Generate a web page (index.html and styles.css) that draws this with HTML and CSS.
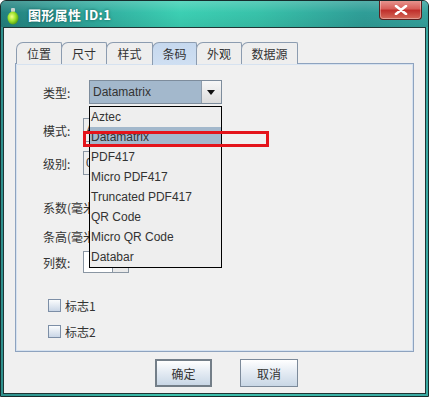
FILE: index.html
```html
<!DOCTYPE html>
<html lang="zh-CN">
<head>
    <meta charset="UTF-8">
    <title>图形属性 ID:1</title>
    <link rel="stylesheet" href="styles.css">
</head>
<body>
    <div class="window">
        <div class="titlebar">
            <svg class="app-icon" width="12" height="17" viewBox="0 0 12 17">
                <defs>
                    <radialGradient id="bulb" cx="0.4" cy="0.4" r="0.7">
                        <stop offset="0" stop-color="#f4ff8a"/>
                        <stop offset="0.5" stop-color="#9be22a"/>
                        <stop offset="1" stop-color="#3c8a10"/>
                    </radialGradient>
                </defs>
                <rect x="4" y="0" width="4" height="4" rx="1" fill="#c9d3d0"/>
                <ellipse cx="6" cy="10" rx="5.5" ry="6.5" fill="url(#bulb)"/>
            </svg>
            <span class="title">图形属性 ID:1</span>
            <div class="close-btn">
                <svg width="14" height="10" viewBox="0 0 14 10">
                    <path d="M2 1 L12 9 M12 1 L2 9" stroke="#fff" stroke-width="2.6" stroke-linecap="round"/>
                </svg>
            </div>
        </div>

        <div class="client">
            <div class="tabs">
                <div class="tab w46">位置</div>
                <div class="tab w46">尺寸</div>
                <div class="tab w47">样式</div>
                <div class="tab w45 selected">条码</div>
                <div class="tab w46">外观</div>
                <div class="tab w57">数据源</div>
            </div>

            <div class="panel">
                <div class="row r-type">
                    <span class="label">类型:</span>
                    <div class="combo">
                        <span class="combo-value">Datamatrix</span>
                        <span class="combo-arrow"></span>
                    </div>
                </div>
                <div class="row r-mode">
                    <span class="label">模式:</span>
                    <div class="field">A</div>
                </div>
                <div class="row r-level">
                    <span class="label">级别:</span>
                    <div class="field">0</div>
                </div>
                <div class="row r-factor">
                    <span class="label clip">系数(毫米):</span>
                </div>
                <div class="row r-height">
                    <span class="label clip">条高(毫米):</span>
                </div>
                <div class="row r-cols">
                    <span class="label">列数:</span>
                    <div class="spinner">
                        <div class="spin-field"></div>
                        <div class="spin-btns"></div>
                    </div>
                </div>

                <label class="check c1"><span class="box"></span>标志1</label>
                <label class="check c2"><span class="box"></span>标志2</label>

                <ul class="dropdown">
                    <li>Aztec</li>
                    <li class="active">Datamatrix</li>
                    <li>PDF417</li>
                    <li>Micro PDF417</li>
                    <li>Truncated PDF417</li>
                    <li>QR Code</li>
                    <li>Micro QR Code</li>
                    <li>Databar</li>
                </ul>
                <div class="mark"></div>
            </div>

            <div class="buttons">
                <button class="btn default">确定</button>
                <button class="btn">取消</button>
            </div>
        </div>
    </div>
</body>
</html>
```

FILE: styles.css
```css
* {
    box-sizing: border-box;
    margin: 0;
    padding: 0;
}

body {
    font-family: "Noto Sans CJK SC", "Liberation Sans", sans-serif;
    font-size: 12px;
    color: #333;
    background: #fff;
}

.window {
    width: 429px;
    height: 397px;
    border: 1px solid #162c2c;
    border-radius: 6px 6px 0 0;
    background: linear-gradient(90deg, #2e8f8c 0%, #3cc3ad 40%, #3aa9a2 100%);
    display: flex;
    flex-direction: column;
    overflow: hidden;
}

/* title bar */
.titlebar {
    height: 26px;
    flex: none;
    display: flex;
    align-items: center;
    padding-left: 6px;
    background:
        linear-gradient(180deg, rgba(255, 255, 255, 0.18) 0%, rgba(255, 255, 255, 0) 45%, rgba(0, 0, 0, 0.06) 100%),
        linear-gradient(90deg, #23807e 0%, #2fa89c 20%, #3ccfb3 42%, #38c2aa 60%, #2f9d97 85%, #35a29d 100%);
    position: relative;
}

.app-icon {
    margin-top: 4px;
}

.title {
    margin-left: 9px;
    font-size: 13px;
    font-weight: bold;
    color: #fff;
    text-shadow: 0 0 3px rgba(0, 40, 40, 0.6);
    letter-spacing: 0.3px;
}

.close-btn {
    position: absolute;
    right: 6px;
    top: -1px;
    width: 43px;
    height: 20px;
    border: 1px solid #5a1f1f;
    border-top: none;
    border-radius: 0 0 4px 4px;
    background: linear-gradient(180deg, #e89a94 0%, #d8605a 45%, #c0302c 55%, #d46a5a 100%);
    box-shadow: inset 0 0 0 1px rgba(255, 255, 255, 0.35);
    display: flex;
    align-items: center;
    justify-content: center;
}

/* client area */
.client {
    flex: 1;
    margin: 0 2px 2px;
    border: 1px solid #1f3535;
    background: #f0f0f0;
    display: flex;
    flex-direction: column;
}

.tabs {
    display: flex;
    height: 22px;
    margin: 14px 0 -1px 12px;
    position: relative;
    z-index: 1;
}

.tab {
    height: 22px;
    margin-right: -1px;
    border: 1px solid #8c9cb0;
    border-bottom: none;
    border-radius: 7px 2px 0 0;
    background: #eeeeee;
    display: flex;
    align-items: center;
    justify-content: center;
    padding-bottom: 1px;
}

.tab.selected {
    background: linear-gradient(180deg, #c6d8ee 0%, #cfdff2 100%);
    height: 23px;
}

.w45 { width: 45px; }
.w46 { width: 46px; }
.w47 { width: 47px; }
.w57 { width: 57px; }

.panel {
    position: relative;
    margin-left: 11px;
    width: 399px;
    height: 289px;
    border: 1px solid #8ea3bf;
    box-shadow: inset 0 0 0 1px #d6e2f0;
    padding: 0 0 0 27px;
}

.row {
    display: flex;
    align-items: center;
    height: 24px;
}

.label {
    width: 40px;
    flex: none;
    white-space: nowrap;
}

/* labels that run under the open list are cut at its edge */
.label.clip {
    width: 46px;
    overflow: hidden;
}

.r-type { margin-top: 16px; }
.r-mode { margin-top: 14px; }
.r-level { margin-top: 9px; }
.r-factor { margin-top: 20px; }
.r-height { margin-top: 5px; }
.r-cols { margin-top: 3px; height: 22px; }

.combo {
    margin-left: 6px;
    width: 133px;
    height: 24px;
    border: 1px solid #7d8c9c;
    background: #a3b8cc;
    display: flex;
    align-items: center;
}

.combo-value {
    flex: 1;
    padding-left: 3px;
    font-family: "Liberation Sans", sans-serif;
    font-size: 12px;
    color: #333;
}

.combo-arrow {
    width: 20px;
    height: 22px;
    border-left: 1px solid #8e9cab;
    background: linear-gradient(180deg, #f7f7f7 0%, #dcdcdc 100%);
    position: relative;
}

.combo-arrow::after {
    content: "";
    position: absolute;
    left: 5px;
    top: 9px;
    border-left: 4.5px solid transparent;
    border-right: 4.5px solid transparent;
    border-top: 5px solid #111;
}

.field {
    width: 110px;
    height: 24px;
    border: 1px solid #8a96a3;
    background: #eeeeee;
    padding-left: 2px;
    line-height: 22px;
    font-family: "Liberation Sans", sans-serif;
}

.spinner {
    display: flex;
    height: 22px;
}

.spin-field {
    width: 30px;
    border: 1px solid #8a96a3;
    background: #fff;
}

.spin-btns {
    width: 16px;
    border: 1px solid #8a96a3;
    border-left: none;
    background: #eaeaea;
}

.check {
    display: flex;
    align-items: center;
    height: 13px;
    margin-left: 5px;
    gap: 4px;
}

.c1 { margin-top: 26px; }
.c2 { margin-top: 13px; }

.box {
    width: 13px;
    height: 13px;
    border: 1px solid #7c8ea6;
    background: linear-gradient(180deg, #fbfcfd 0%, #c9d6e6 100%);
}

/* open combo list */
.dropdown {
    list-style: none;
    position: absolute;
    left: 73px;
    top: 42px;
    width: 133px;
    border: 1px solid #000;
    background: #eeeeee;
    z-index: 2;
    font-family: "Liberation Sans", sans-serif;
    font-size: 12px;
}

.dropdown li {
    height: 20px;
    line-height: 20px;
    padding-left: 1px;
    color: #333;
}

.dropdown li.active {
    background: #a3b8cc;
}

.mark {
    position: absolute;
    left: 67px;
    top: 67px;
    width: 186px;
    height: 16px;
    border: 3px solid #e4141b;
    z-index: 3;
}

/* dialog buttons */
.buttons {
    display: flex;
    justify-content: center;
    gap: 28px;
    padding-left: 24px;
    margin-top: 7px;
}

.btn {
    width: 57px;
    height: 28px;
    border: 1px solid #7c8a9a;
    background: linear-gradient(180deg, #ffffff 0%, #e8eef5 40%, #c9d7e6 100%);
    font-family: "Noto Sans CJK SC", sans-serif;
    font-size: 12px;
    color: #333;
}

.btn + .btn {
    width: 58px;
}

.btn.default {
    border: 2px solid #737e88;
}
```
